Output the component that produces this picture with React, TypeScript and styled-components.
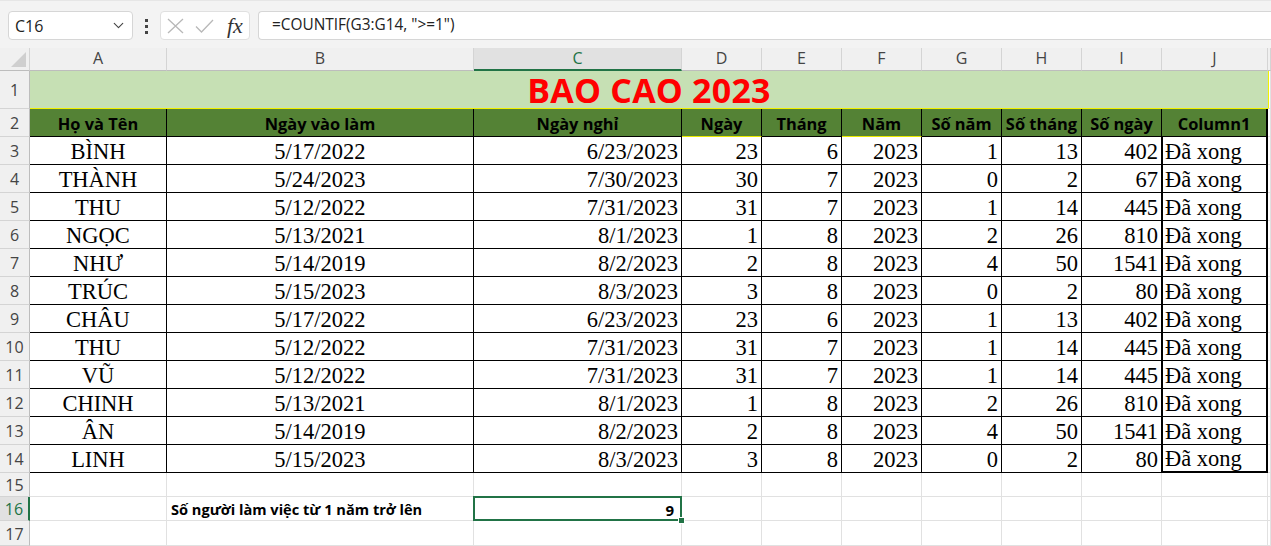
import styled, { createGlobalStyle, css } from "styled-components";
import { ChevronDown } from "lucide-react";

const GlobalStyle = createGlobalStyle`
  html, body {
    margin: 0;
    padding: 0;
    background: #ffffff;
    overflow: hidden;
  }
  * {
    box-sizing: border-box;
  }
`;

type Align = "left" | "center" | "right";

interface IRow {
  name: string;
  start: string;
  end: string;
  values: number[];
}

const rows: IRow[] = [
  { name: "BÌNH", start: "5/17/2022", end: "6/23/2023", values: [23, 6, 2023, 1, 13, 402] },
  { name: "THÀNH", start: "5/24/2023", end: "7/30/2023", values: [30, 7, 2023, 0, 2, 67] },
  { name: "THU", start: "5/12/2022", end: "7/31/2023", values: [31, 7, 2023, 1, 14, 445] },
  { name: "NGỌC", start: "5/13/2021", end: "8/1/2023", values: [1, 8, 2023, 2, 26, 810] },
  { name: "NHƯ", start: "5/14/2019", end: "8/2/2023", values: [2, 8, 2023, 4, 50, 1541] },
  { name: "TRÚC", start: "5/15/2023", end: "8/3/2023", values: [3, 8, 2023, 0, 2, 80] },
  { name: "CHÂU", start: "5/17/2022", end: "6/23/2023", values: [23, 6, 2023, 1, 13, 402] },
  { name: "THU", start: "5/12/2022", end: "7/31/2023", values: [31, 7, 2023, 1, 14, 445] },
  { name: "VŨ", start: "5/12/2022", end: "7/31/2023", values: [31, 7, 2023, 1, 14, 445] },
  { name: "CHINH", start: "5/13/2021", end: "8/1/2023", values: [1, 8, 2023, 2, 26, 810] },
  { name: "ÂN", start: "5/14/2019", end: "8/2/2023", values: [2, 8, 2023, 4, 50, 1541] },
  { name: "LINH", start: "5/15/2023", end: "8/3/2023", values: [3, 8, 2023, 0, 2, 80] },
];

const columns = ["A", "B", "C", "D", "E", "F", "G", "H", "I", "J", ""];

const headings = [
  "Họ và Tên",
  "Ngày vào làm",
  "Ngày nghỉ",
  "Ngày",
  "Tháng",
  "Năm",
  "Số năm",
  "Số tháng",
  "Số ngày",
  "Column1",
];

const CancelIcon = () => (
  <svg width="17" height="16" viewBox="0 0 17 16" fill="none">
    <path d="M1 1L16 15M16 1L1 15" stroke="#b8b8b8" strokeWidth="1.3" />
  </svg>
);

const EnterIcon = () => (
  <svg width="19" height="14" viewBox="0 0 19 14" fill="none">
    <path d="M1 7.5L6.5 13L18 1" stroke="#b8b8b8" strokeWidth="1.3" />
  </svg>
);

const App: React.FC = () => {
  return (
    <>
      <GlobalStyle />
      <Toolbar>
        <NameBox>
          <span>C16</span>
          <ChevronDown size={17} strokeWidth={1.6} color="#444" />
        </NameBox>
        <Dots>
          <i />
          <i />
          <i />
        </Dots>
        <FunctionBox>
          <CancelIcon />
          <EnterIcon />
          <Fx>fx</Fx>
        </FunctionBox>
        <FormulaBox>=COUNTIF(G3:G14, "&gt;=1")</FormulaBox>
      </Toolbar>

      <Sheet>
        <Corner>
          <Triangle />
        </Corner>
        {columns.map((col) => (
          <ColHeader key={col || "K"} $selected={col === "C"}>
            {col}
          </ColHeader>
        ))}

        <RowHeader>1</RowHeader>
        <TitleCell>BAO CAO 2023</TitleCell>
        <EmptyCell $yellowLeft />

        <RowHeader>2</RowHeader>
        {headings.map((h, i) => (
          <HeadCell key={h} $yellowBottom={i === 3 || i === 5} $last={i === 9}>
            {h}
          </HeadCell>
        ))}
        <EmptyCell />

        {rows.map((row, r) => (
          <RowGroup key={r} row={row} index={r} last={r === rows.length - 1} />
        ))}

        <RowHeader>15</RowHeader>
        {columns.map((col) => (
          <EmptyCell key={col || "K"} />
        ))}

        <RowHeader $selected>16</RowHeader>
        <EmptyCell />
        <NoteCell>Số người làm việc từ 1 năm trở lên</NoteCell>
        <SelectedCell>
          9
          <FillHandle />
        </SelectedCell>
        {columns.slice(3).map((col) => (
          <EmptyCell key={col || "K"} />
        ))}

        <RowHeader>17</RowHeader>
        {columns.map((col) => (
          <EmptyCell key={col || "K"} />
        ))}
      </Sheet>
    </>
  );
};

const RowGroup: React.FC<{ row: IRow; index: number; last: boolean }> = ({ row, index, last }) => (
  <>
    <RowHeader>{index + 3}</RowHeader>
    <DataCell $align="center">{row.name}</DataCell>
    <DataCell $align="center">{row.start}</DataCell>
    <DataCell $align="right">{row.end}</DataCell>
    {row.values.map((v, i) => (
      <DataCell key={i} $align="right">
        {v}
      </DataCell>
    ))}
    <StatusCell $last={last}>Đã xong</StatusCell>
    <EmptyCell />
  </>
);

export default App;

const uiFont = `"Open Sans", "Noto Sans", sans-serif`;

const Toolbar = styled.div`
  display: flex;
  align-items: flex-start;
  height: 48px;
  padding: 10px 0 0 8px;
  background: #f3f3f3;
  border-top: 1px solid #e6e6e6;
  font-family: ${uiFont};
`;

const NameBox = styled.div`
  display: flex;
  align-items: center;
  justify-content: space-between;
  width: 125px;
  height: 29px;
  padding: 0 5px 0 6px;
  background: #ffffff;
  border: 1px solid #d6d6d6;
  border-radius: 4px;
  font-size: 16px;
  color: #222;
`;

const Dots = styled.div`
  display: flex;
  flex-direction: column;
  align-items: center;
  gap: 3px;
  width: 27px;
  padding-top: 8px;
  i {
    display: block;
    width: 3px;
    height: 3px;
    background: #444;
  }
`;

const FunctionBox = styled.div`
  display: flex;
  align-items: center;
  gap: 11px;
  width: 90px;
  height: 29px;
  padding: 0 4px 0 6px;
  background: #ffffff;
  border: 1px solid #e0e0e0;
  border-radius: 4px;
`;

const Fx = styled.span`
  margin-left: 2px;
  font-family: "Liberation Serif", serif;
  font-style: italic;
  font-size: 22px;
  line-height: 1;
  color: #333;
`;

const FormulaBox = styled.div`
  flex: 1;
  height: 29px;
  margin-left: 8px;
  padding: 2px 0 0 13px;
  background: #ffffff;
  border: 1px solid #d6d6d6;
  border-right: none;
  border-radius: 4px 0 0 4px;
  font-size: 15.4px;
  color: #222;
  white-space: pre;
`;

const Sheet = styled.div`
  display: grid;
  grid-template-columns: 30px 137px 307px 208px repeat(6, 80px) 106px 1fr;
  grid-template-rows: 23px 38px 28px repeat(12, 28px) 24px 24px 25px;
  background: #ffffff;
`;

const headerBase = css`
  display: flex;
  align-items: center;
  justify-content: center;
  background: #f0f0f0;
  font-family: ${uiFont};
  font-size: 16px;
  line-height: 1.2;
  color: #444;
`;

const Corner = styled.div`
  ${headerBase};
  position: relative;
  border-right: 1px solid #d4d4d4;
  border-bottom: 1px solid #bdbdbd;
`;

const Triangle = styled.div`
  position: absolute;
  right: 3px;
  bottom: 3px;
  width: 0;
  height: 0;
  border-left: 15px solid transparent;
  border-bottom: 15px solid #cfcfcf;
`;

const ColHeader = styled.div<{ $selected?: boolean }>`
  ${headerBase};
  border-right: 1px solid #d4d4d4;
  border-bottom: 1px solid #bdbdbd;
  ${(p) =>
    p.$selected &&
    css`
      background: #e1e1e1;
      color: #217346;
      border-bottom: 2px solid #217346;
    `}
`;

const RowHeader = styled.div<{ $selected?: boolean }>`
  ${headerBase};
  border-right: 1px solid #bdbdbd;
  border-bottom: 1px solid #d4d4d4;
  padding-top: 3px;
  ${(p) =>
    p.$selected &&
    css`
      background: #e1e1e1;
      color: #217346;
      border-right: 2px solid #217346;
    `}
`;

const TitleCell = styled.div`
  grid-column: span 10;
  display: flex;
  align-items: center;
  justify-content: center;
  padding-top: 1px;
  background: #c6e0b4;
  border-bottom: 1px solid #f2f200;
  font-family: ${uiFont};
  font-weight: 700;
  font-size: 34px;
  line-height: 1;
  letter-spacing: 0.2px;
  color: #ff0000;
`;

const HeadCell = styled.div<{ $yellowBottom?: boolean; $last?: boolean }>`
  display: flex;
  align-items: center;
  justify-content: center;
  padding-top: 2px;
  background: #548235;
  border-right: 1px solid #000;
  border-bottom: 1px solid ${(p) => (p.$yellowBottom ? "#e8e800" : "#000")};
  font-family: ${uiFont};
  font-weight: 700;
  font-size: 16.4px;
  line-height: 1.2;
  color: #000;
  white-space: nowrap;
  overflow: hidden;
  ${(p) =>
    p.$last &&
    css`
      border-right: 2px solid #000;
    `}
`;

const DataCell = styled.div<{ $align: Align }>`
  display: flex;
  align-items: flex-end;
  justify-content: ${(p) =>
    p.$align === "center" ? "center" : p.$align === "right" ? "flex-end" : "flex-start"};
  padding: 0 3px 0 3px;
  border-right: 1px solid #000;
  border-bottom: 1px solid #000;
  font-family: "Liberation Serif", "Times New Roman", serif;
  font-size: 22.5px;
  line-height: 25px;
  color: #000;
  white-space: nowrap;
`;

const StatusCell = styled(DataCell).attrs({ $align: "left" as Align })<{ $last?: boolean }>`
  border-left: 1px solid #000;
  border-right: 2px solid #000;
  border-bottom: ${(p) => (p.$last ? "2px" : "1px")} solid #000;
  padding-left: 2px;
`;

const EmptyCell = styled.div<{ $yellowLeft?: boolean }>`
  border-right: 1px solid #e1e1e1;
  border-bottom: 1px solid #e1e1e1;
  ${(p) =>
    p.$yellowLeft &&
    css`
      border-left: 1px solid #f2f200;
    `}
`;

const NoteCell = styled.div`
  display: flex;
  align-items: center;
  padding: 2px 0 0 4px;
  border-right: 1px solid #e1e1e1;
  border-bottom: 1px solid #e1e1e1;
  font-family: ${uiFont};
  font-weight: 700;
  font-size: 14.6px;
  line-height: 1.2;
  color: #000;
  white-space: nowrap;
`;

const SelectedCell = styled.div`
  position: relative;
  display: flex;
  align-items: center;
  justify-content: flex-end;
  padding: 2px 6px 0 0;
  margin: -1px 0 0 -1px;
  border: 2px solid #217346;
  font-family: ${uiFont};
  font-weight: 700;
  font-size: 15px;
  line-height: 1.2;
  color: #000;
`;

const FillHandle = styled.span`
  position: absolute;
  right: -5px;
  bottom: -5px;
  width: 7px;
  height: 7px;
  background: #217346;
  border: 1px solid #ffffff;
`;
